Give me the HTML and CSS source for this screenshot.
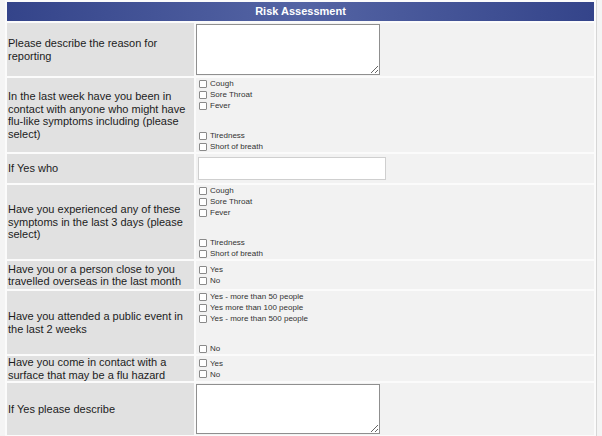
FILE: index.html
```html
<!DOCTYPE html>
<html>
<head>
<meta charset="utf-8">
<link rel="stylesheet" href="styles.css">
</head>
<body>
<table class="form">
  <colgroup><col class="c1"><col class="c2"></colgroup>
  <tr><th colspan="2" class="head">Risk Assessment</th></tr>
  <tr class="r1">
    <td class="lbl">Please describe the reason for reporting</td>
    <td class="val"><textarea class="ta"></textarea></td>
  </tr>
  <tr class="r2">
    <td class="lbl">In the last week have you been in contact with anyone who might have flu-like symptoms including (please select)</td>
    <td class="val">
      <label class="opt"><input type="checkbox">Cough</label>
      <label class="opt"><input type="checkbox">Sore Throat</label>
      <label class="opt"><input type="checkbox">Fever</label>
      <div class="spacer"></div>
      <label class="opt"><input type="checkbox">Tiredness</label>
      <label class="opt"><input type="checkbox">Short of breath</label>
    </td>
  </tr>
  <tr class="r3">
    <td class="lbl">If Yes who</td>
    <td class="val"><input type="text" class="txt"></td>
  </tr>
  <tr class="r4">
    <td class="lbl">Have you experienced any of these symptoms in the last 3 days (please select)</td>
    <td class="val">
      <label class="opt"><input type="checkbox">Cough</label>
      <label class="opt"><input type="checkbox">Sore Throat</label>
      <label class="opt"><input type="checkbox">Fever</label>
      <div class="spacer"></div>
      <label class="opt"><input type="checkbox">Tiredness</label>
      <label class="opt"><input type="checkbox">Short of breath</label>
    </td>
  </tr>
  <tr class="r5">
    <td class="lbl">Have you or a person close to you travelled overseas in the last month</td>
    <td class="val mid">
      <label class="opt"><input type="checkbox">Yes</label>
      <label class="opt"><input type="checkbox">No</label>
    </td>
  </tr>
  <tr class="r6">
    <td class="lbl">Have you attended a public event in the last 2 weeks</td>
    <td class="val">
      <label class="opt"><input type="checkbox">Yes - more than 50 people</label>
      <label class="opt"><input type="checkbox">Yes more than 100 people</label>
      <label class="opt"><input type="checkbox">Yes - more than 500 people</label>
      <div class="spacer"></div>
      <label class="opt"><input type="checkbox">No</label>
    </td>
  </tr>
  <tr class="r7">
    <td class="lbl">Have you come in contact with a surface that may be a flu hazard</td>
    <td class="val mid">
      <label class="opt"><input type="checkbox">Yes</label>
      <label class="opt"><input type="checkbox">No</label>
    </td>
  </tr>
  <tr class="r8">
    <td class="lbl">If Yes please describe</td>
    <td class="val"><textarea class="ta ta2"></textarea></td>
  </tr>
</table>
</body>
</html>
```

FILE: styles.css
```css
html, body {
  margin: 0;
  padding: 0;
  background: #f4f4f4;
  font-family: "Liberation Sans", Arial, sans-serif;
  overflow: hidden;
}
.form {
  margin-left: 5px;
  width: 592px;
  border-collapse: separate;
  border-spacing: 2px;
  background: #fbfbfb;
  border-right: 1px solid #d6d6d6;
  table-layout: fixed;
}
.c1 { width: 187px; }
.c2 { width: 398px; }
.head {
  height: 19px;
  padding: 0;
  background: linear-gradient(to right, #34448a 0%, #5464a4 50%, #34448a 100%);
  color: #fff;
  font-size: 11px;
  font-weight: bold;
  text-align: center;
  line-height: 19px;
}
.lbl {
  background: #e1e1e1;
  color: #1c1c1c;
  font-size: 11px;
  line-height: 12.5px;
  padding: 0 1px;
  vertical-align: middle;
}
.val {
  background: #f2f2f2;
  padding: 0;
  vertical-align: top;
}
.val.mid { vertical-align: middle; }
.r1 td { height: 53px; }
.r2 td { height: 74px; }
.r3 td { height: 29px; }
.r4 td { height: 74px; }
.r5 td { height: 28px; }
.r6 td { height: 62px; }
.r7 td { height: 25px; }
.r8 td { height: 52px; }
.opt {
  display: flex;
  align-items: center;
  height: 11px;
  font-size: 8px;
  color: #333;
  padding-left: 3px;
}
.opt input {
  -webkit-appearance: none;
  appearance: none;
  width: 8px;
  height: 8px;
  margin: 0 3px 0 0;
  border: 1px solid #8a8a8a;
  background: #fff;
  box-sizing: border-box;
  border-radius: 1px;
}
.spacer { height: 19px; }
.ta {
  display: block;
  box-sizing: border-box;
  width: 184px;
  height: 51px;
  margin: 1px 0 0 0;
  border: 1px solid #8f8f8f;
  background: #fff;
  resize: both;
}
.ta2 { height: 50px; }
.txt {
  display: block;
  box-sizing: border-box;
  width: 188px;
  height: 23px;
  margin: 3px 0 0 2px;
  border: 1px solid #cfcfcf;
  background: #fff;
}
```
